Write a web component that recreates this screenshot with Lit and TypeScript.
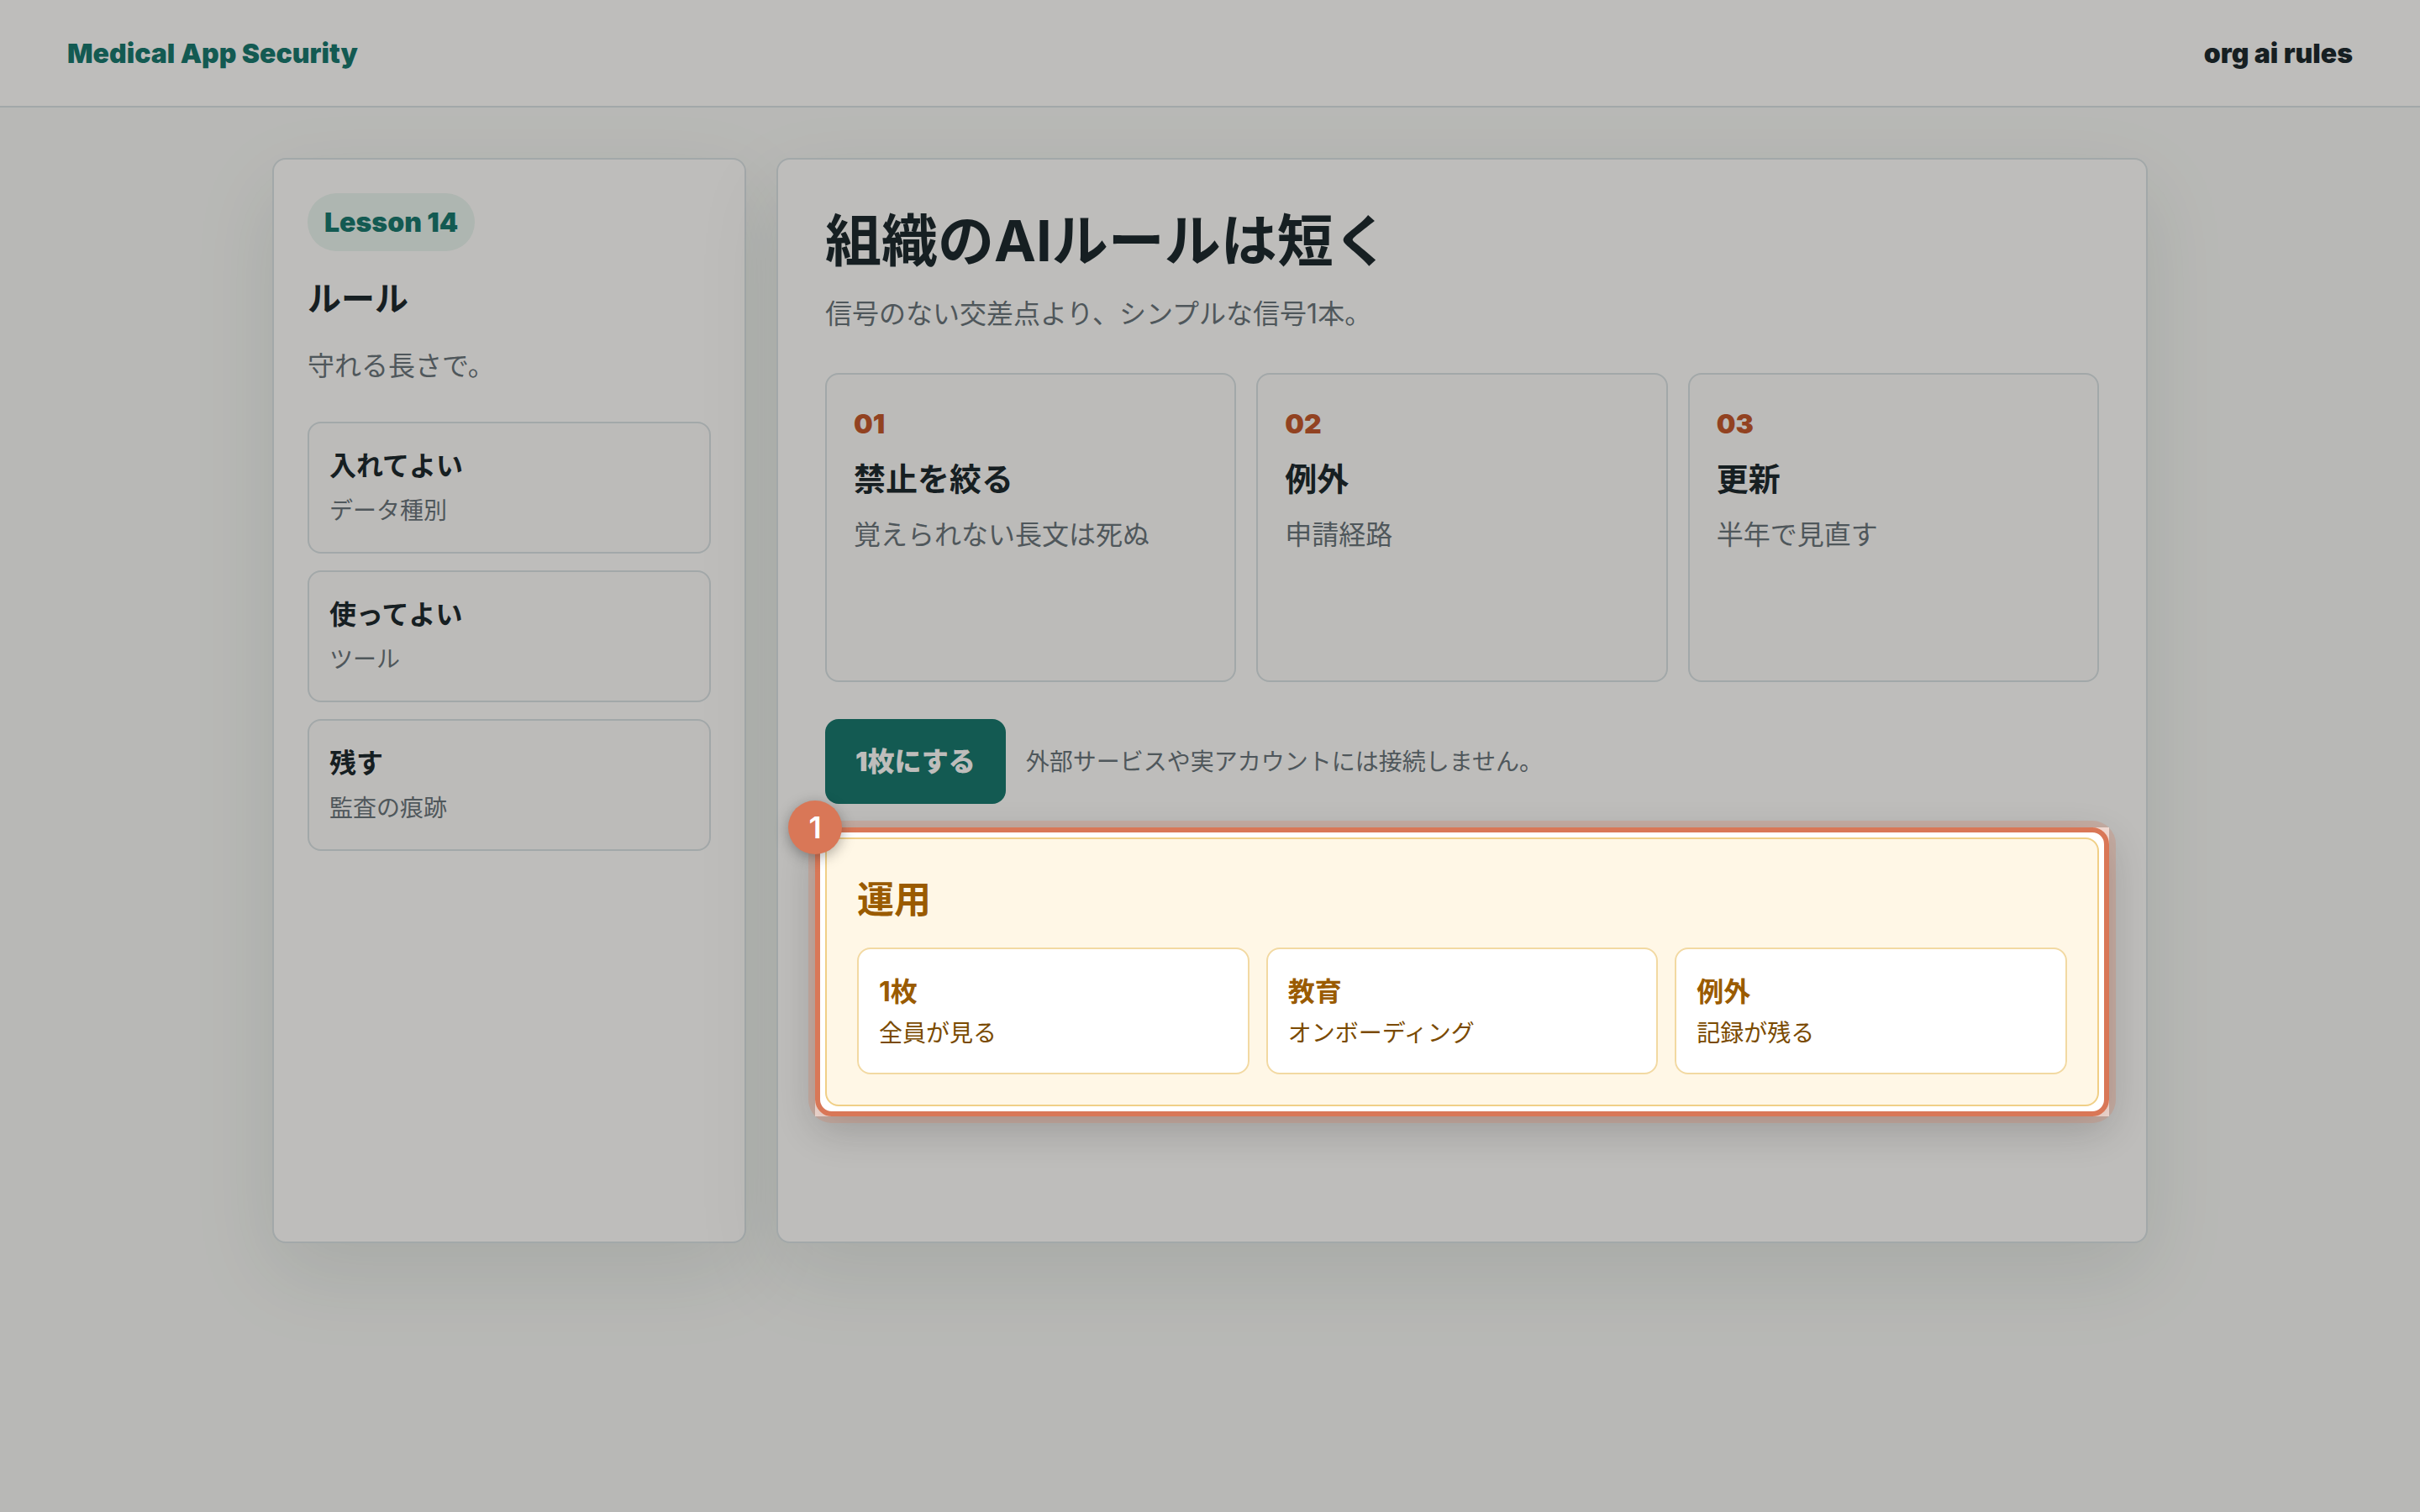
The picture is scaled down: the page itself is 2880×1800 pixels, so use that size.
import { LitElement, html, css } from "lit";
import { customElement, property } from "lit/decorators.js";

interface Note {
  title: string;
  text: string;
}

const sideNotes: Note[] = [
  { title: "入れてよい", text: "データ種別" },
  { title: "使ってよい", text: "ツール" },
  { title: "残す", text: "監査の痕跡" },
];

const steps: Note[] = [
  { title: "禁止を絞る", text: "覚えられない長文は死ぬ" },
  { title: "例外", text: "申請経路" },
  { title: "更新", text: "半年で見直す" },
];

const results: Note[] = [
  { title: "1枚", text: "全員が見る" },
  { title: "教育", text: "オンボーディング" },
  { title: "例外", text: "記録が残る" },
];

const reset = css`
  * {
    box-sizing: border-box;
    margin: 0;
    padding: 0;
  }
  ul,
  ol {
    list-style: none;
  }
`;

/** Frame that dims the page around its content and carries a step number. */
@customElement("spot-light")
class SpotLight extends LitElement {
  @property({ type: Number }) step = 1;

  static styles = [
    reset,
    css`
      :host {
        display: block;
        position: relative;
        z-index: 1;
      }
      .dim,
      .ring {
        position: absolute;
        inset: -12px;
        pointer-events: none;
      }
      .dim {
        box-shadow: 0 0 0 4000px rgba(22, 17, 12, 0.28);
      }
      .ring {
        border: 6px solid #d97757;
        border-radius: 20px;
        box-shadow: 0 0 0 8px rgba(217, 119, 87, 0.25), 0 16px 48px rgba(20, 20, 19, 0.2);
      }
      .badge {
        position: absolute;
        top: -44px;
        left: -44px;
        width: 64px;
        height: 64px;
        border-radius: 50%;
        background: #d97757;
        color: #fff;
        font-size: 36px;
        line-height: 64px;
        font-weight: 600;
        text-align: center;
        box-shadow: 0 4px 16px rgba(20, 20, 19, 0.35);
      }
    `,
  ];

  render() {
    return html`
      <div class="dim"></div>
      <slot></slot>
      <div class="ring"></div>
      <span class="badge">${this.step}</span>
    `;
  }
}

@customElement("app-root")
class AppRoot extends LitElement {
  static styles = [
    reset,
    css`
      :host {
        --ink: #17242b;
        --muted: #66727b;
        --line: #d9e2e6;
        --teal: #12766e;
        --soft: #fdfcfc;
        display: block;
        position: relative;
        min-height: 100vh;
        overflow: hidden;
        background: #f7f9f8;
        color: var(--ink);
        font-family: Inter, "Noto Sans CJK JP", sans-serif;
        font-size: 32px;
        line-height: 53px;
      }
      .topbar {
        display: flex;
        align-items: center;
        justify-content: space-between;
        min-height: 128px;
        padding: 36px 80px;
        background: #fff;
        border-bottom: 2px solid var(--line);
        font-weight: 900;
      }
      .brand {
        color: var(--teal);
        text-decoration: none;
      }
      .layout {
        display: grid;
        grid-template-columns: 564px 1fr;
        gap: 36px;
        max-width: 2360px;
        margin: 0 auto;
        padding: 60px 64px;
      }
      .panel {
        min-height: 1292px;
        background: #fff;
        border: 2px solid var(--line);
        border-radius: 16px;
        box-shadow: 0 36px 100px rgba(23, 50, 43, 0.1);
      }
      .side {
        padding: 40px;
      }
      .main {
        padding: 56px;
      }
      .lesson {
        display: block;
        width: fit-content;
        padding: 8px 20px;
        border-radius: 40px;
        background: #e9f5f1;
        color: var(--teal);
        font-weight: 900;
      }
      .side-title {
        margin-top: 24px;
        font-size: 40px;
        line-height: 66px;
      }
      .lead {
        margin-top: 20px;
        color: var(--muted);
      }
      .notes {
        display: grid;
        gap: 20px;
        margin-top: 40px;
      }
      .note {
        display: grid;
        gap: 4px;
        padding: 24px 24px 26px;
        background: var(--soft);
        border: 2px solid var(--line);
        border-radius: 16px;
      }
      .small {
        font-size: 28px;
        line-height: 46px;
        color: var(--muted);
      }
      .title {
        font-size: 67px;
        line-height: 81px;
      }
      .steps {
        display: grid;
        grid-template-columns: repeat(3, 1fr);
        gap: 24px;
        margin-top: 44px;
      }
      .step {
        display: flex;
        flex-direction: column;
        gap: 8px;
        min-height: 368px;
        padding: 32px;
        background: var(--soft);
        border: 2px solid var(--line);
        border-radius: 16px;
      }
      .num {
        color: #c2552a;
        font-weight: 900;
      }
      .step-title {
        font-size: 38px;
        line-height: 63px;
      }
      .step-text {
        color: var(--muted);
      }
      .actions {
        display: flex;
        align-items: center;
        gap: 24px;
        margin: 44px 0 40px;
      }
      .primary {
        padding: 24px 36px;
        border: 0;
        border-radius: 16px;
        background: var(--teal);
        color: #fff;
        font: inherit;
        font-weight: 900;
      }
      .result {
        padding: 36px;
        background: #fff7e6;
        border: 2px solid #f0cf87;
        border-radius: 16px;
        color: #9a5b00;
      }
      .result-title {
        font-size: 44px;
        line-height: 73px;
      }
      .result-list {
        display: grid;
        grid-template-columns: repeat(3, 1fr);
        gap: 20px;
        margin-top: 20px;
      }
      .result-card {
        display: grid;
        padding: 24px;
        background: #fff;
        border: 2px solid #f2d9a2;
        border-radius: 16px;
      }
      .result-card .small {
        color: #7a4a00;
      }
    `,
  ];

  render() {
    return html`
      <header class="topbar">
        <a class="brand" href="#">Medical App Security</a>
        <span>org ai rules</span>
      </header>
      <div class="layout">
        <aside class="panel side">
          <span class="lesson">Lesson 14</span>
          <h2 class="side-title">ルール</h2>
          <p class="lead">守れる長さで。</p>
          <ul class="notes">
            ${sideNotes.map(
              (n) => html`<li class="note"><strong>${n.title}</strong><span class="small">${n.text}</span></li>`
            )}
          </ul>
        </aside>
        <main class="panel main">
          <h1 class="title">組織のAIルールは短く</h1>
          <p class="lead">信号のない交差点より、シンプルな信号1本。</p>
          <ol class="steps">
            ${steps.map(
              (s, i) => html`<li class="step">
                <span class="num">${String(i + 1).padStart(2, "0")}</span>
                <h3 class="step-title">${s.title}</h3>
                <p class="step-text">${s.text}</p>
              </li>`
            )}
          </ol>
          <div class="actions">
            <button class="primary" type="button">1枚にする</button>
            <span class="small">外部サービスや実アカウントには接続しません。</span>
          </div>
          <spot-light .step=${1}>
            <section class="result">
              <h2 class="result-title">運用</h2>
              <ul class="result-list">
                ${results.map(
                  (r) => html`<li class="result-card"><strong>${r.title}</strong><span class="small">${r.text}</span></li>`
                )}
              </ul>
            </section>
          </spot-light>
        </main>
      </div>
    `;
  }
}
